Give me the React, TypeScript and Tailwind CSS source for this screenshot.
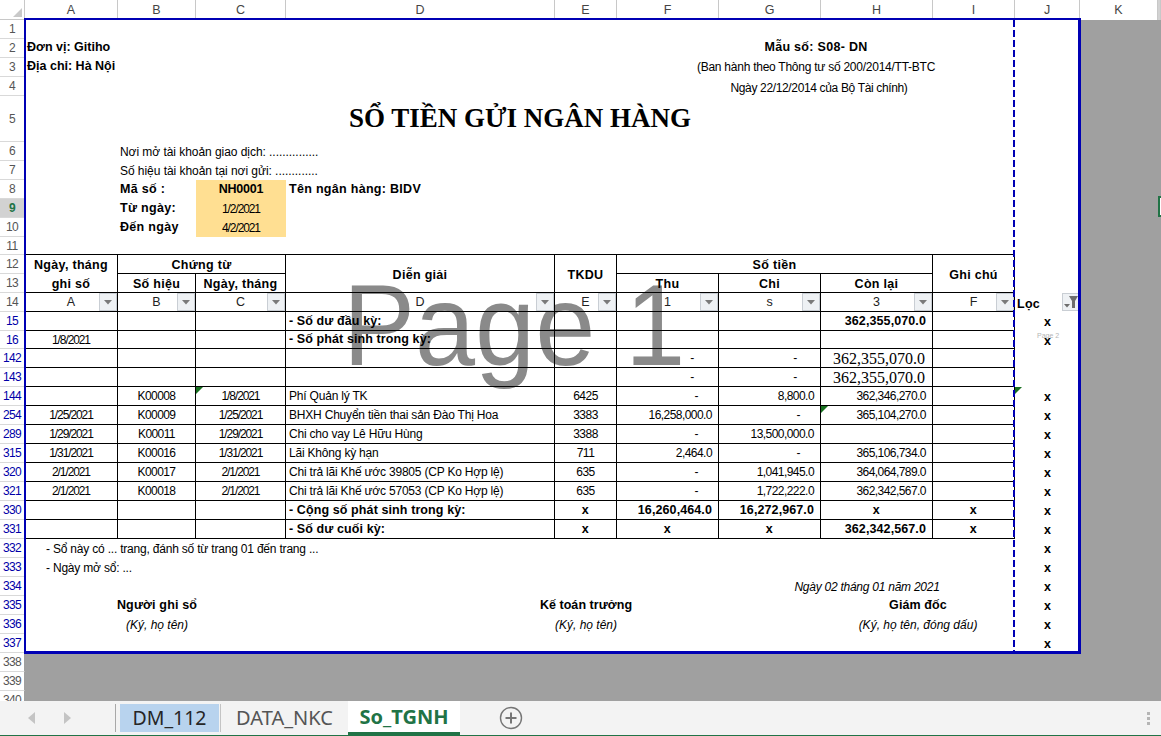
import { ReactNode } from "react";
import clsx from "clsx";
import { twMerge } from "tailwind-merge";

const T = "border-r border-b border-black";
const BOLD = "font-bold tracking-[0.3px]";
const BLUE = 15; // rows from here on are filtered, so their numbers are blue

type Ledger = {
  n: number;
  a?: string;
  b: string;
  c: string;
  d: string;
  e: string;
  f: string;
  g: string;
  h?: string;
  triC?: boolean;
  triH?: boolean;
  triJ?: boolean;
};

const ledger: Ledger[] = [
  { n: 144, b: "K00008", c: "1/8/2021", d: "Phí Quản lý TK", e: "6425", f: "-", g: "8,800.0", h: "362,346,270.0", triC: true, triJ: true },
  { n: 254, a: "1/25/2021", b: "K00009", c: "1/25/2021", d: "BHXH Chuyển tiền thai sản Đào Thị Hoa", e: "3383", f: "16,258,000.0", g: "-", h: "365,104,270.0", triH: true },
  { n: 289, a: "1/29/2021", b: "K00011", c: "1/29/2021", d: "Chi cho vay Lê Hữu Hùng", e: "3388", f: "-", g: "13,500,000.0" },
  { n: 315, a: "1/31/2021", b: "K00016", c: "1/31/2021", d: "Lãi Không kỳ hạn", e: "711", f: "2,464.0", g: "-", h: "365,106,734.0" },
  { n: 320, a: "2/1/2021", b: "K00017", c: "2/1/2021", d: "Chi trả lãi Khế ước 39805 (CP Ko Hợp lệ)", e: "635", f: "-", g: "1,041,945.0", h: "364,064,789.0" },
  { n: 321, a: "2/1/2021", b: "K00018", c: "2/1/2021", d: "Chi trả lãi Khế ước 57053 (CP Ko Hợp lệ)", e: "635", f: "-", g: "1,722,222.0", h: "362,342,567.0" },
];

function Cell({ className, children }: { className?: string; children?: ReactNode }) {
  return <div className={twMerge("relative flex items-center whitespace-nowrap text-[12px] tracking-[-0.2px] text-black", className)}>{children}</div>;
}

// bold text in the sheet runs a little larger than the regular text
function Head({ className, children }: { className?: string; children?: ReactNode }) {
  return <Cell className={twMerge("text-[12.5px]", BOLD, className)}>{children}</Cell>;
}

function Rh({ n, sel }: { n: number; sel?: boolean }) {
  return (
    <div
      className={clsx(
        "col-start-1 flex items-center justify-center border-r border-b border-r-[#9f9f9f] border-b-[#d9d9d9] text-[12px] tracking-[-0.6px] overflow-hidden",
        sel ? "bg-[#d2d2d2] font-bold text-[#217346]" : "bg-white",
        !sel && n >= BLUE && n < 338 ? "text-[#0000a8]" : !sel && "text-[#555555]"
      )}
    >
      {n}
    </div>
  );
}

function Ch({ label, className }: { label?: string; className?: string }) {
  return (
    <div className={twMerge("flex items-center justify-center border-r border-[#c8c8c8] bg-white text-[12.5px] text-[#444444]", className)}>
      {label}
    </div>
  );
}

function Filter({ active }: { active?: boolean }) {
  return (
    <div className="absolute right-0 top-0 flex h-[18px] w-[18px] items-center justify-center border border-[#c9ced4] bg-[#eef1f4]">
      {active ? (
        <svg width="16" height="16" viewBox="0 0 16 16">
          <path d="M6 2h9l-3 5v7H9V7z" fill="#6d6d6d" />
          <path d="M1 10h6l-3 3.5z" fill="#6d6d6d" />
        </svg>
      ) : (
        <svg width="8" height="5" viewBox="0 0 8 5">
          <path d="M0 0h8L4 4.5z" fill="#7a7a7a" />
        </svg>
      )}
    </div>
  );
}

function Tri() {
  return <div className="absolute left-0 top-0 h-0 w-0 border-t-[7px] border-r-[7px] border-t-[#17701f] border-r-transparent" />;
}

function X() {
  return <Cell className="col-start-11 justify-center pt-[2px] text-[12.5px] font-bold">x</Cell>;
}

function Letter({ l }: { l: string }) {
  return (
    <Cell className={clsx(T, "justify-center text-[12.5px] tracking-normal text-[#222222]")}>
      {l}
      <Filter />
    </Cell>
  );
}

function Money({ v, bold }: { v?: string; bold?: boolean }) {
  return (
    <Cell className={clsx(T, "justify-end", v === "-" ? "pr-[20px]" : "pr-[6px]", bold ? "text-[12.5px] font-bold tracking-[0.1px]" : "tracking-[-0.55px]")}>
      {v}
    </Cell>
  );
}

function Tab({ label, className }: { label: string; className?: string }) {
  return <div className={twMerge("flex items-center justify-center font-['Noto_Sans',sans-serif] text-[20px]", className)}>{label}</div>;
}

export default function App() {
  return (
    <div className="flex h-[736px] w-[1161px] flex-col overflow-hidden font-['Liberation_Sans',Arial,sans-serif]">
      <div className="relative h-[701px] overflow-hidden bg-[#a0a0a0]">
        {/* print area and page watermarks sit behind the cells */}
        <div className="absolute left-[25px] top-[20px] h-[632px] w-[1055px] overflow-hidden bg-white">
          <div className="absolute left-[318px] top-[254px] origin-[0_85%] scale-y-[1.07] whitespace-nowrap text-[108px] leading-none text-[#8a8a8a]">Page 1</div>
          <div className="absolute left-[1012px] top-[312px] whitespace-nowrap text-[7px] leading-none text-[#b5b5b5]">Page 2</div>
        </div>

        <div className="relative z-10 grid grid-cols-[25px_93px_78px_90px_269px_62px_102px_102px_112px_82px_65px_78px_3px] grid-rows-[20px_repeat(4,19px)_46px_repeat(5,19px)_18px_repeat(4,19px)_18px_repeat(19,19px)]">
          {/* column headings */}
          <div className="flex items-end justify-end border-r border-b border-[#c8c8c8] bg-white p-[2px]">
            <svg width="9" height="9" viewBox="0 0 9 9">
              <path d="M9 0v9H0z" fill="#c9c9c9" />
            </svg>
          </div>
          {["A", "B", "C", "D", "E", "F", "G", "H", "I", "J", "K"].map((c) => (
            <Ch key={c} label={c} />
          ))}
          <Ch className="bg-[#d2d2d2]" />

          <Rh n={1} />

          <Rh n={2} />
          <Head className="pb-[2px] pl-[2px] tracking-normal">Đơn vị: Gitiho</Head>
          <Head className="col-start-7 col-span-4 justify-center pb-[2px]">Mẫu số: S08- DN</Head>

          <Rh n={3} />
          <Head className="pb-[2px] pl-[2px] tracking-normal">Địa chỉ: Hà Nội</Head>
          <Cell className="col-start-7 col-span-4 justify-center pb-[2px] tracking-[-0.25px]">(Ban hành theo Thông tư số 200/2014/TT-BTC</Cell>

          <Rh n={4} />
          <Cell className="col-start-7 col-span-4 justify-center pl-[6px] pt-[2px] tracking-[-0.35px]">Ngày 22/12/2014 của Bộ Tài chính)</Cell>

          <Rh n={5} />
          <Cell className="col-span-9 justify-center pb-[2px] font-['Liberation_Serif',serif] text-[27px] font-bold tracking-normal">SỔ TIỀN GỬI NGÂN HÀNG</Cell>

          <Rh n={6} />
          <Cell className="col-start-3 pl-[2px] tracking-[-0.05px]">Nơi mở tài khoản giao dịch: ...............</Cell>

          <Rh n={7} />
          <Cell className="col-start-3 pl-[2px] tracking-[-0.05px]">Số hiệu tài khoản tại nơi gửi: .............</Cell>

          <Rh n={8} />
          <Head className="col-start-3 pl-[2px]">Mã số :</Head>
          <Head className="justify-center bg-[#ffdf92] tracking-[-0.2px]">NH0001</Head>
          <Head className="pl-[3px]">Tên ngân hàng: BIDV</Head>

          <Rh n={9} sel />
          <Head className="col-start-3 pl-[2px]">Từ ngày:</Head>
          <Cell className="justify-center bg-[#ffdf92] tracking-[-1.1px]">1/2/2021</Cell>

          <Rh n={10} />
          <Head className="col-start-3 pl-[2px]">Đến ngày</Head>
          <Cell className="justify-center bg-[#ffdf92] tracking-[-1.1px]">4/2/2021</Cell>

          <Rh n={11} />
          {[0, 1, 2, 3, 4, 5, 6, 7, 8].map((i) => (
            <Cell key={i} className="border-b border-black" />
          ))}

          <Rh n={12} />
          <Head className="justify-center border-r border-black pt-[2px]">Ngày, tháng</Head>
          <Head className={clsx(T, "col-span-2 justify-center pt-[2px]")}>Chứng từ</Head>
          <Head className={clsx(T, "row-span-2 justify-center pt-[3px]")}>Diễn giải</Head>
          <Head className={clsx(T, "row-span-2 justify-center pt-[3px]")}>TKDU</Head>
          <Head className={clsx(T, "col-span-3 justify-center pt-[2px]")}>Số tiền</Head>
          <Head className={clsx(T, "row-span-2 justify-center pt-[3px]")}>Ghi chú</Head>

          <Rh n={13} />
          {["ghi số", "Số hiệu", "Ngày, tháng"].map((h) => (
            <Head key={h} className={clsx(T, "justify-center pt-[2px]")}>{h}</Head>
          ))}
          {["Thu", "Chi", "Còn lại"].map((h) => (
            <Head key={h} className={clsx(T, "justify-center pt-[2px]")}>{h}</Head>
          ))}

          <Rh n={14} />
          {["A", "B", "C", "D", "E", "1", "s", "3", "F"].map((l) => (
            <Letter key={l} l={l} />
          ))}
          <Head className="pl-[2px] pt-[3px]">
            Lọc
            <Filter active />
          </Head>

          <Rh n={15} />
          <Cell className={T} />
          <Cell className={T} />
          <Cell className={T} />
          <Head className={clsx(T, "pl-[3px] tracking-[0.1px]")}>- Số dư đầu kỳ:</Head>
          <Cell className={T} />
          <Cell className={T} />
          <Cell className={T} />
          <Money v="362,355,070.0" bold />
          <Cell className={T} />
          <X />

          <Rh n={16} />
          <Cell className={clsx(T, "justify-center tracking-[-1.1px]")}>1/8/2021</Cell>
          <Cell className={T} />
          <Cell className={T} />
          <Head className={clsx(T, "pl-[3px] tracking-[0.1px]")}>- Số phát sinh trong kỳ:</Head>
          <Cell className={T} />
          <Cell className={T} />
          <Cell className={T} />
          <Cell className={T} />
          <Cell className={T} />
          <X />

          {[142, 143].map((n) => (
            <div key={n} className="contents">
              <Rh n={n} />
              <Cell className={T} />
              <Cell className={T} />
              <Cell className={T} />
              <Cell className={T} />
              <Cell className={T} />
              <Cell className={clsx(T, "justify-end pr-[24px]")}>-</Cell>
              <Cell className={clsx(T, "justify-end pr-[23px]")}>-</Cell>
              <Cell className={clsx(T, "justify-end pr-[7px] pt-[2px] font-['Liberation_Serif',serif] text-[16px] tracking-normal")}>362,355,070.0</Cell>
              <Cell className={T} />
            </div>
          ))}

          {ledger.map((r) => (
            <div key={r.n} className="contents">
              <Rh n={r.n} />
              <Cell className={clsx(T, "justify-center tracking-[-1.1px]")}>{r.a}</Cell>
              <Cell className={clsx(T, "justify-center tracking-[-0.6px]")}>{r.b}</Cell>
              <Cell className={clsx(T, "justify-center tracking-[-1.1px]")}>
                {r.triC && <Tri />}
                {r.c}
              </Cell>
              <Cell className={clsx(T, "pl-[3px]")}>{r.d}</Cell>
              <Cell className={clsx(T, "justify-center tracking-[-0.5px]")}>{r.e}</Cell>
              <Money v={r.f} />
              <Money v={r.g} />
              <Cell className={clsx(T, "justify-end pr-[6px] tracking-[-0.55px]")}>
                {r.triH && <Tri />}
                {r.h}
              </Cell>
              <Cell className={T} />
              <Cell className="col-start-11 justify-center pt-[2px] text-[12.5px] font-bold">
                {r.triJ && <Tri />}x
              </Cell>
            </div>
          ))}

          <Rh n={330} />
          <Cell className={T} />
          <Cell className={T} />
          <Cell className={T} />
          <Head className={clsx(T, "pl-[3px] tracking-[0.1px]")}>- Cộng số phát sinh trong kỳ:</Head>
          <Head className={clsx(T, "justify-center")}>x</Head>
          <Money v="16,260,464.0" bold />
          <Money v="16,272,967.0" bold />
          <Head className={clsx(T, "justify-center")}>x</Head>
          <Head className={clsx(T, "justify-center")}>x</Head>
          <X />

          <Rh n={331} />
          <Cell className={T} />
          <Cell className={T} />
          <Cell className={T} />
          <Head className={clsx(T, "pl-[3px] tracking-[0.1px]")}>- Số dư cuối kỳ:</Head>
          <Head className={clsx(T, "justify-center")}>x</Head>
          <Head className={clsx(T, "justify-center")}>x</Head>
          <Head className={clsx(T, "justify-center")}>x</Head>
          <Money v="362,342,567.0" bold />
          <Head className={clsx(T, "justify-center")}>x</Head>
          <X />

          <Rh n={332} />
          <Cell className="pl-[21px]">- Sổ này có ... trang, đánh số từ trang 01 đến trang ...</Cell>
          <X />

          <Rh n={333} />
          <Cell className="pl-[21px]">- Ngày mở sổ: ...</Cell>
          <X />

          <Rh n={334} />
          <Cell className="col-start-8 col-span-3 justify-center italic tracking-[-0.25px]">Ngày 02 tháng 01 năm 2021</Cell>
          <X />

          <Rh n={335} />
          <Head className="col-start-3 justify-center tracking-[0.15px]">Người ghi sổ</Head>
          <Head className="col-start-6 justify-center tracking-[0.05px]">Kế toán trưởng</Head>
          <Head className="col-start-9 col-span-2 justify-center tracking-[0.1px]">Giám đốc</Head>
          <X />

          <Rh n={336} />
          <Cell className="col-start-3 justify-center italic tracking-normal">(Ký, họ tên)</Cell>
          <Cell className="col-start-6 justify-center italic tracking-normal">(Ký, họ tên)</Cell>
          <Cell className="col-start-9 col-span-2 justify-center italic tracking-normal">(Ký, họ tên, đóng dấu)</Cell>
          <X />

          <Rh n={337} />
          <X />

          <Rh n={338} />
          <Rh n={339} />
          <Rh n={340} />
        </div>

        {/* page break, print area outline and the selected cell */}
        <div className="pointer-events-none absolute left-[1013px] top-[20px] z-20 h-[632px] w-[2px] bg-[repeating-linear-gradient(to_bottom,#0000b4_0_7px,transparent_7px_10px)]" />
        <div className="pointer-events-none absolute left-[24px] top-[18px] z-20 h-[636px] w-[1057px] border-t-2 border-r-[3px] border-b-[3px] border-l-2 border-[#0000b4]" />
        <div className="absolute left-[1158px] top-[196px] z-20 h-[21px] w-[12px] border-2 border-[#217346] bg-white" />
      </div>

      {/* sheet tabs */}
      <div className="flex h-[35px] items-stretch border-b border-[#217346] bg-[#f3f3f3]">
        <div className="flex w-[115px] items-center gap-[27px] pl-[28px]">
          <svg width="8" height="12" viewBox="0 0 8 12">
            <path d="M7 0v12L0 6z" fill="#c4c4c4" />
          </svg>
          <svg width="8" height="12" viewBox="0 0 8 12">
            <path d="M1 0v12l7-6z" fill="#c4c4c4" />
          </svg>
        </div>
        <div className="my-[3px] w-[1px] bg-[#a8a8a8]" />
        <Tab label="DM_112" className="my-[3px] ml-[4px] w-[99px] bg-[#b8d3ee] text-[19.5px] text-[#262626]" />
        <div className="my-[3px] ml-[1px] w-[1px] bg-[#c4c4c4]" />
        <Tab label="DATA_NKC" className="w-[127px] text-[#555555]" />
        <Tab label="So_TGNH" className="w-[112px] border-b-[3px] border-b-[#217346] bg-white font-bold text-[#217346]" />
        <div className="ml-[39px] flex items-center">
          <svg width="24" height="24" viewBox="0 0 24 24" fill="none" stroke="#767676">
            <circle cx="12" cy="12" r="10.5" strokeWidth="1.4" />
            <path d="M12 6.5v11M6.5 12h11" strokeWidth="2" />
          </svg>
        </div>
        <div className="ml-auto mr-[11px] flex flex-col justify-center gap-[2px]">
          <div className="h-[3px] w-[3px] bg-[#b5b5b5]" />
          <div className="h-[3px] w-[3px] bg-[#b5b5b5]" />
          <div className="h-[3px] w-[3px] bg-[#b5b5b5]" />
        </div>
      </div>
    </div>
  );
}
